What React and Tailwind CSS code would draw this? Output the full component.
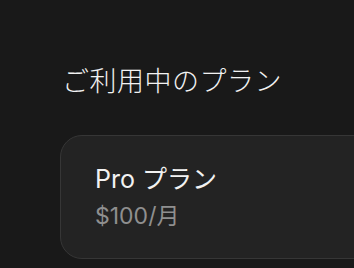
export default function App() {
  return (
    <div
      className="w-[354px] h-[268px] overflow-hidden bg-[#191919] text-[#f2f2f2]"
      style={{ fontFamily: 'Inter, "Noto Sans CJK JP", sans-serif' }}
    >
      <div className="pl-[60px] pt-[62px]">
        {/* Section title */}
        <h2 className="pl-[2px] text-[27px] leading-[40px] font-light tracking-[0.5px]">
          ご利用中のプラン
        </h2>

        {/* Current plan card */}
        <div className="mt-[33px] w-[340px] h-[124px] rounded-[22px] border border-[#363636] bg-[#232323] pl-[34px] pt-[26px]">
          <p className="text-[25px] leading-[34px]">Pro プラン</p>
          <p className="mt-[4px] text-[23px] leading-[32px] text-[#8f8f8f]">$100/月</p>
        </div>
      </div>
    </div>
  )
}
